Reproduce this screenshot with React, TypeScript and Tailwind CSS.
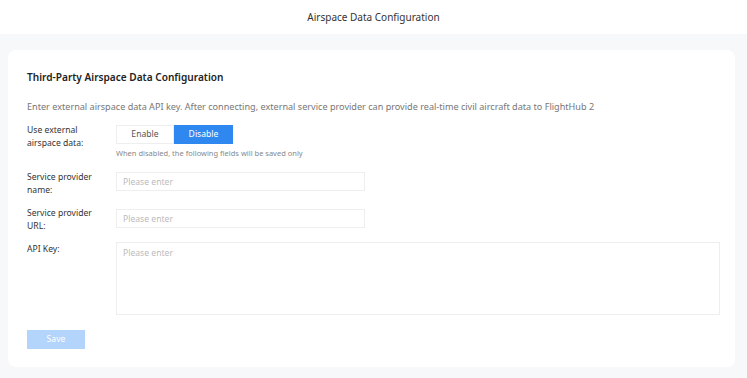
import React, { useState } from 'react';

const font = { fontFamily: '"Noto Sans", "Open Sans", sans-serif' };

const App: React.FC = () => {
  const [useExternal, setUseExternal] = useState<'enable' | 'disable'>('disable');

  return (
    <div className="min-h-screen bg-[#f7f8fa]" style={font}>
      {/* Header */}
      <div className="h-[34px] bg-white flex items-center justify-center">
        <h1 className="text-[10px] text-[#333]">Airspace Data Configuration</h1>
      </div>

      <div className="pt-[16px] pl-[8px] pr-[12px] pb-[10px]">
        <div className="bg-white rounded-[8px] pl-[19px] pr-[15px] pt-[20px] pb-[18px]">
          <h2 className="text-[10.1px] font-semibold text-[#222] leading-[14px]">
            Third-Party Airspace Data Configuration
          </h2>
          <p className="mt-[17px] text-[9.1px] text-[#777] leading-[12px] whitespace-nowrap">
            Enter external airspace data API key. After connecting, external service provider can provide real-time civil aircraft data to FlightHub 2
          </p>

          {/* Use external */}
          <div className="mt-[11px] flex">
            <div className="w-[89px] shrink-0 text-[8.6px] text-[#333] leading-[13px]">
              Use external
              <br />
              airspace data:
            </div>
            <div className="pt-[1px]">
              <div className="flex">
                <button
                  onClick={() => setUseExternal('enable')}
                  className={`w-[58px] h-[19px] text-[8.6px] border ${
                    useExternal === 'enable'
                      ? 'bg-[#2f88f0] border-[#2f88f0] text-white'
                      : 'bg-white border-[#eeeeee] text-[#555]'
                  }`}
                >
                  Enable
                </button>
                <button
                  onClick={() => setUseExternal('disable')}
                  className={`w-[59px] h-[19px] text-[8.6px] border ${
                    useExternal === 'disable'
                      ? 'bg-[#2f88f0] border-[#2f88f0] text-white'
                      : 'bg-white border-[#eeeeee] text-[#555]'
                  }`}
                >
                  Disable
                </button>
              </div>
              <div className="mt-[4px] text-[7.5px] text-[#888] leading-[11px]">
                When disabled, the following fields will be saved only
              </div>
            </div>
          </div>

          {/* Service provider name */}
          <div className="mt-[12px] flex">
            <div className="w-[89px] shrink-0 text-[8.6px] text-[#333] leading-[13px]">
              Service provider
              <br />
              name:
            </div>
            <input
              placeholder="Please enter"
              className="mt-[1px] w-[249px] h-[19px] border border-[#eeeeee] px-[6px] text-[8.6px] outline-none placeholder:text-[#bbb]"
            />
          </div>

          {/* Service provider URL */}
          <div className="mt-[10px] flex">
            <div className="w-[89px] shrink-0 text-[8.6px] text-[#333] leading-[13px]">
              Service provider
              <br />
              URL:
            </div>
            <input
              placeholder="Please enter"
              className="mt-[2px] w-[249px] h-[19px] border border-[#eeeeee] px-[6px] text-[8.6px] outline-none placeholder:text-[#bbb]"
            />
          </div>

          {/* API Key */}
          <div className="mt-[9px] flex">
            <div className="w-[89px] shrink-0 text-[8.6px] text-[#333] leading-[13px] pt-[1px]">API Key:</div>
            <textarea
              placeholder="Please enter"
              className="flex-1 h-[73px] border border-[#eeeeee] px-[6px] py-[4px] text-[8.6px] outline-none resize-none placeholder:text-[#bbb]"
            />
          </div>

          <button className="mt-[15px] w-[58px] h-[19px] bg-[#b3d5fb] text-white text-[8.6px]">Save</button>
        </div>
      </div>
    </div>
  );
};

export default App;
